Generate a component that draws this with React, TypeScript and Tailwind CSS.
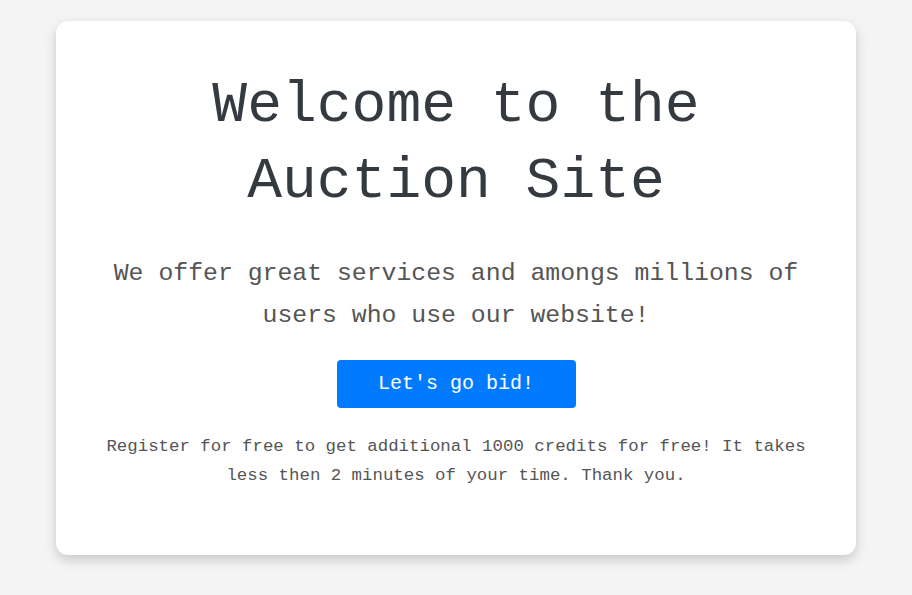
export default function App() {
  return (
    <main className="min-h-[595px] bg-[#f4f4f4] flex flex-col items-center pt-[21px] font-['Liberation_Mono',monospace]">
      {/* Welcome card */}
      <section className="w-[800px] bg-white rounded-[12px] shadow-[0_5px_12px_rgba(0,0,0,0.18)] px-10 pt-[47px] pb-[65px] flex flex-col items-center text-center">
        <h1 className="text-[58px] leading-[76px] text-[#343a40]">
          Welcome to the
          <br />
          Auction Site
        </h1>

        <p className="mt-8 text-[24.8px] leading-[42px] text-[#555]">
          We offer great services and amongs millions of users who use our website!
        </p>

        <button className="mt-6 w-[239px] h-[48px] rounded-[4px] bg-[#007bff] text-white text-[20px]">
          Let's go bid!
        </button>

        <p className="mt-6 text-[17.4px] leading-[29px] text-[#555]">
          Register for free to get additional 1000 credits for free! It takes less then 2 minutes of your time. Thank you.
        </p>
      </section>
    </main>
  );
}
